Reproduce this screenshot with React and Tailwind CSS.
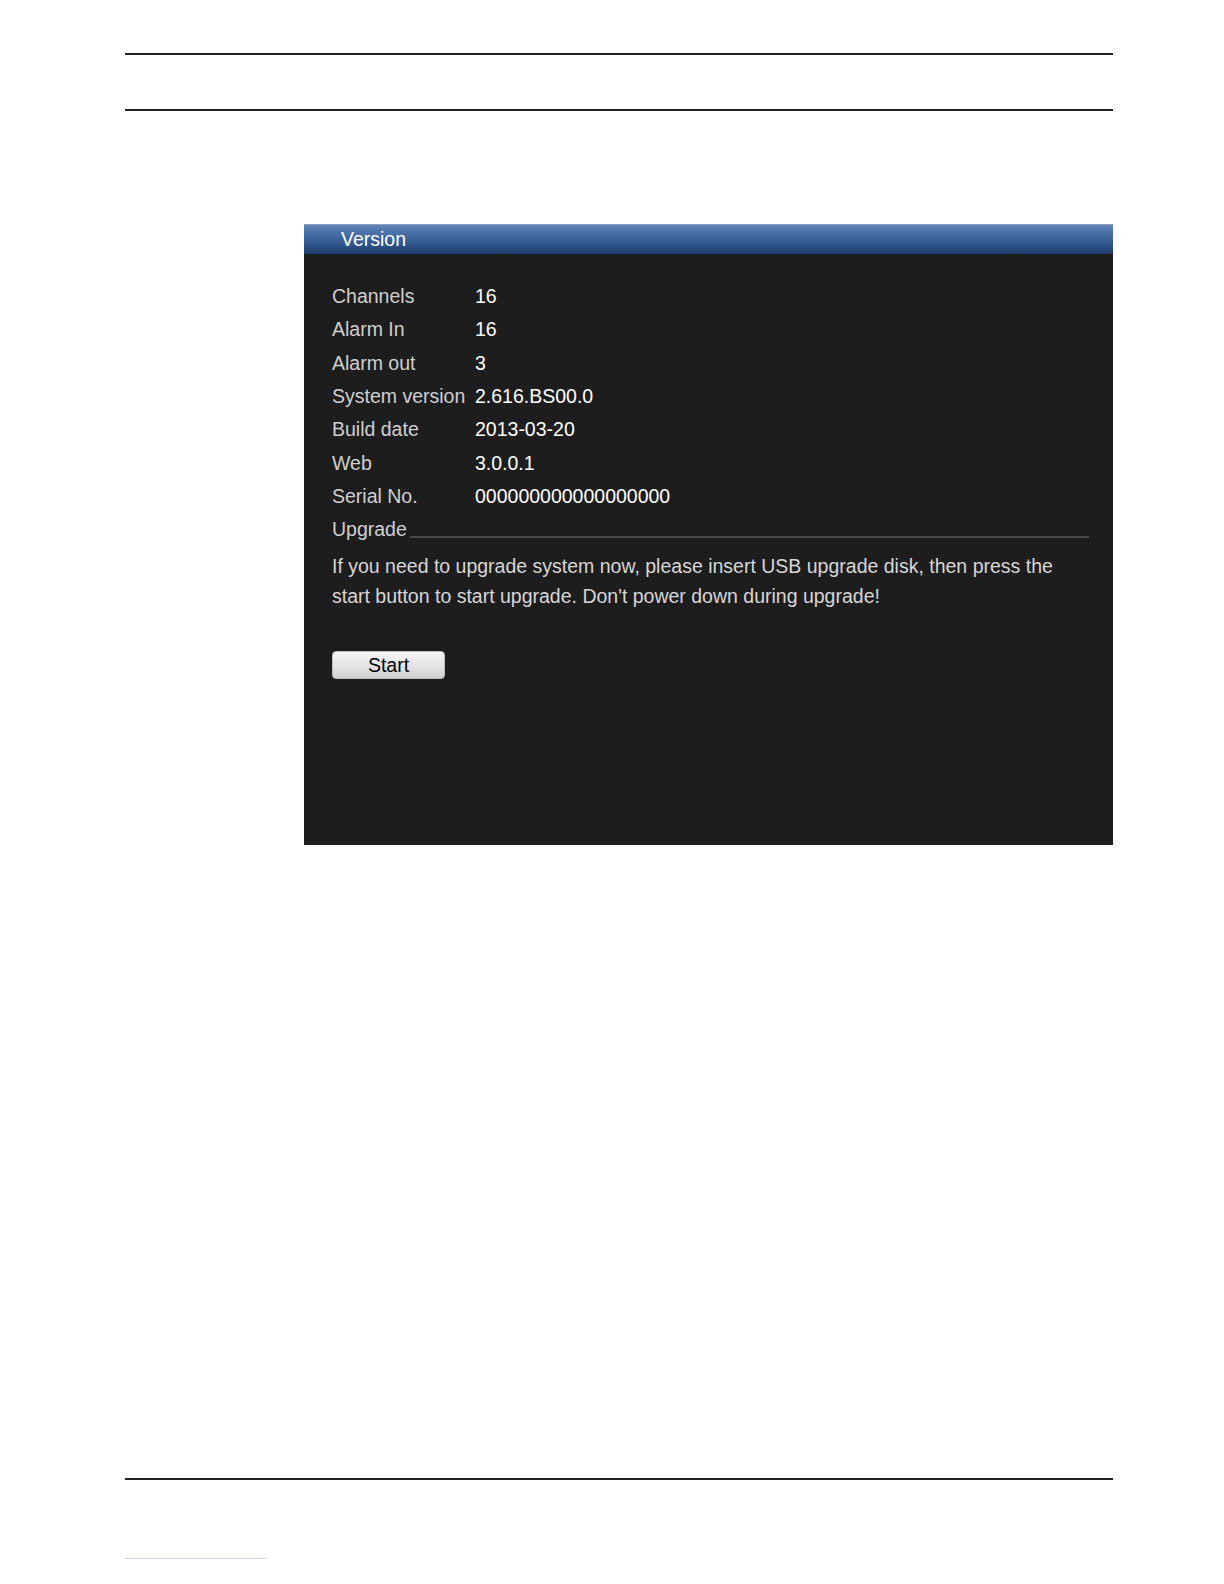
const rows = [
  ['Channels', '16'],
  ['Alarm In', '16'],
  ['Alarm out', '3'],
  ['System version', '2.616.BS00.0'],
  ['Build date', '2013-03-20'],
  ['Web', '3.0.0.1'],
  ['Serial No.', '000000000000000000'],
];

const VersionPanel = () => (
  <div className="ml-[179px] mt-[113px] flex h-[621px] w-[809px] flex-col bg-[#1e1d1e]">
    <div className="flex h-[30px] items-center border-t border-[#8fa3bf] bg-gradient-to-b from-[#5f85b8] via-[#3a619a] to-[#1d3a6a] pl-[37px] text-[19.5px] text-white">
      Version
    </div>
    <div className="flex flex-col pl-[28px] pr-[24px] pt-[26px]">
      {rows.map(([label, value]) => (
        <div key={label} className="flex h-[33.3px] items-center">
          <span className="w-[143px] shrink-0 text-[#cfcfcf]">{label}</span>
          <span className="text-white">{value}</span>
        </div>
      ))}
      <div className="flex h-[33.3px] items-center">
        <span className="text-[#cfcfcf]">Upgrade</span>
        <div className="ml-[3px] mt-[14px] h-[2px] flex-1 bg-[#474747]" />
      </div>
      <p className="mt-[5px] leading-[30px] text-[#d6d6d6]">
        If you need to upgrade system now, please insert USB upgrade disk, then press the start button to start upgrade. Don't power down during upgrade!
      </p>
      <button className="mt-[40px] flex h-[28px] w-[113px] items-center justify-center rounded-[4px] border border-[#bdbdbd] bg-gradient-to-b from-[#f7f7f7] to-[#d2d2d2] text-[19.5px] text-black">
        Start
      </button>
    </div>
  </div>
);

export default function App() {
  return (
    <div
      className="flex h-[1584px] w-full flex-col overflow-hidden bg-white pl-[125px] pr-[111px] pt-[53px] text-[19.5px]"
      style={{ fontFamily: '"Liberation Sans", Arial, sans-serif' }}
    >
      <div className="h-[2px] bg-[#222]" />
      <div className="mt-[54px] h-[2px] bg-[#222]" />
      <VersionPanel />
      <div className="mt-auto h-[2px] bg-[#222]" />
      <div className="mt-[78px] h-px w-[141px] bg-[#c9d2ea]" />
      <div className="h-[25px]" />
    </div>
  );
}
